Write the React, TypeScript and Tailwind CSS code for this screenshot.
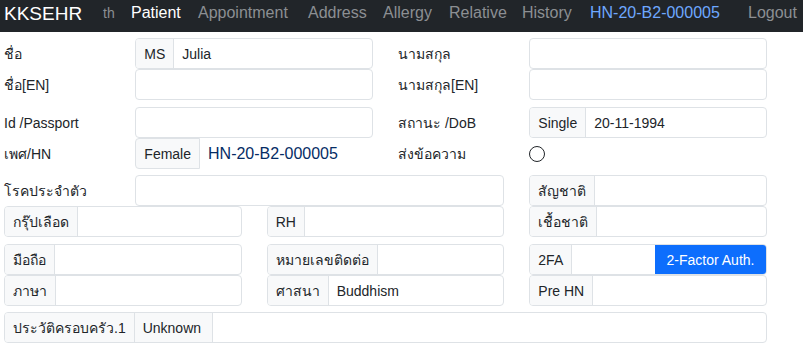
import React from "react";

const font = {
  fontFamily: '"Liberation Sans", "Noto Sans", "DejaVu Sans", sans-serif',
};

// small bits reused on every row
const Addon = ({ children, w, last }: { children: React.ReactNode; w: string; last?: boolean }) => (
  <span
    className={`flex shrink-0 items-center whitespace-nowrap bg-[#f8f9fa] px-2 text-[#212529] ${w} ${last ? "" : "border-r border-[#dee2e6]"}`}
  >
    {children}
  </span>
);

const Group = ({ children }: { children: React.ReactNode }) => (
  <div className="flex h-[31px] overflow-hidden rounded border border-[#dee2e6] bg-white text-sm">
    {children}
  </div>
);

const Field = ({ value }: { value?: string }) => (
  <span className="flex flex-1 items-center whitespace-nowrap px-2 text-[#212529]">{value}</span>
);

const Label = ({ children }: { children: React.ReactNode }) => (
  <div className="flex h-[31px] items-center whitespace-nowrap pr-[25px] text-sm text-[#212529]">{children}</div>
);

const navItems = [
  { t: "th", w: "w-[28px]", c: "text-sm text-[#8c8f93]" },
  { t: "Patient", w: "w-[67px]", c: "text-white" },
  { t: "Appointment", w: "w-[110px]", c: "text-[#8c8f93]" },
  { t: "Address", w: "w-[75px]", c: "text-[#8c8f93]" },
  { t: "Allergy", w: "w-[66px]", c: "text-[#8c8f93]" },
  { t: "Relative", w: "w-[73px]", c: "text-[#8c8f93]" },
  { t: "History", w: "w-[68px]", c: "text-[#8c8f93]" },
  { t: "HN-20-B2-000005", w: "w-[158px]", c: "text-[#6ea8fe]" },
  { t: "Logout", w: "w-[55px]", c: "text-[#8c8f93]" },
];

export default function App() {
  return (
    <div className="min-h-[344px] w-[803px] bg-white" style={font}>
      {/* Navbar */}
      <nav className="flex h-[32px] items-center bg-[#212529] pb-[6px] pl-[4px]">
        <span className="w-[99px] text-[19px] leading-none text-white">KKSEHR</span>
        {navItems.map((n) => (
          <span key={n.t} className={`${n.w} shrink-0 whitespace-nowrap leading-none ${n.c}`}>
            {n.t}
          </span>
        ))}
      </nav>

      {/* Form */}
      <div className="w-[792px] pl-[4px] pt-[6px]">
        {/* pair 1 */}
        <div className="grid grid-cols-6">
          <Label>ชื่อ</Label>
          <div className="col-span-2 pr-[25px]">
            <Group>
              <Addon w="min-w-[38px]">MS</Addon>
              <Field value="Julia" />
            </Group>
          </div>
          <Label>นามสกุล</Label>
          <div className="col-span-2 pr-[25px]">
            <Group>
              <Field />
            </Group>
          </div>
          <Label>ชื่อ[EN]</Label>
          <div className="col-span-2 pr-[25px]">
            <Group>
              <Field />
            </Group>
          </div>
          <Label>นามสกุล[EN]</Label>
          <div className="col-span-2 pr-[25px]">
            <Group>
              <Field />
            </Group>
          </div>
        </div>

        {/* pair 2 */}
        <div className="mt-[7px] grid grid-cols-6">
          <Label>Id /Passport</Label>
          <div className="col-span-2 pr-[25px]">
            <Group>
              <Field />
            </Group>
          </div>
          <Label>สถานะ /DoB</Label>
          <div className="col-span-2 pr-[25px]">
            <Group>
              <Addon w="min-w-[48px]">Single</Addon>
              <Field value="20-11-1994" />
            </Group>
          </div>
          <Label>เพศ/HN</Label>
          <div className="col-span-2 flex h-[31px] items-center pr-[25px]">
            <span className="flex h-[31px] min-w-[64px] items-center rounded-l border border-[#dee2e6] bg-[#f8f9fa] px-2 text-sm text-[#212529]">
              Female
            </span>
            <span className="pl-2 text-base text-[#052c65]">HN-20-B2-000005</span>
          </div>
          <Label>ส่งข้อความ</Label>
          <div className="col-span-2 flex h-[31px] items-center">
            <span className="h-4 w-4 rounded-full border border-[#212529] bg-white" />
          </div>
        </div>

        {/* pair 3 */}
        <div className="mt-[6px] grid grid-cols-6">
          <Label>โรคประจำตัว</Label>
          <div className="col-span-3 pr-[25px]">
            <Group>
              <Field />
            </Group>
          </div>
          <div className="col-span-2 pr-[25px]">
            <Group>
              <Addon w="min-w-[62px]">สัญชาติ</Addon>
              <Field />
            </Group>
          </div>
        </div>
        <div className="grid grid-cols-3">
          <div className="pr-[25px]">
            <Group>
              <Addon w="min-w-[71px]">กรุ๊ปเลือด</Addon>
              <Field />
            </Group>
          </div>
          <div className="pr-[25px]">
            <Group>
              <Addon w="min-w-[37px]">RH</Addon>
              <Field />
            </Group>
          </div>
          <div className="pr-[25px]">
            <Group>
              <Addon w="min-w-[62px]">เชื้อชาติ</Addon>
              <Field />
            </Group>
          </div>
        </div>

        {/* pair 4 */}
        <div className="mt-[7px] grid grid-cols-3">
          <div className="pr-[25px]">
            <Group>
              <Addon w="min-w-[50px]">มือถือ</Addon>
              <Field />
            </Group>
          </div>
          <div className="pr-[25px]">
            <Group>
              <Addon w="min-w-[106px]">หมายเลขติดต่อ</Addon>
              <Field />
            </Group>
          </div>
          <div className="pr-[25px]">
            <Group>
              <Addon w="min-w-[42px]">2FA</Addon>
              <Field />
              <button className="flex w-[111px] shrink-0 items-center justify-center bg-[#0d6efd] text-sm text-white">
                2-Factor Auth.
              </button>
            </Group>
          </div>
          <div className="pr-[25px]">
            <Group>
              <Addon w="min-w-[50px]">ภาษา</Addon>
              <Field />
            </Group>
          </div>
          <div className="pr-[25px]">
            <Group>
              <Addon w="min-w-[57px]">ศาสนา</Addon>
              <Field value="Buddhism" />
            </Group>
          </div>
          <div className="pr-[25px]">
            <Group>
              <Addon w="min-w-[63px]">Pre HN</Addon>
              <Field />
            </Group>
          </div>
        </div>

        {/* family history */}
        <div className="mt-[6px] pr-[25px]">
          <Group>
            <Addon w="min-w-[120px]">ประวัติครอบครัว.1</Addon>
            <Addon w="min-w-[78px]">Unknown</Addon>
            <Field />
          </Group>
        </div>
      </div>
    </div>
  );
}
